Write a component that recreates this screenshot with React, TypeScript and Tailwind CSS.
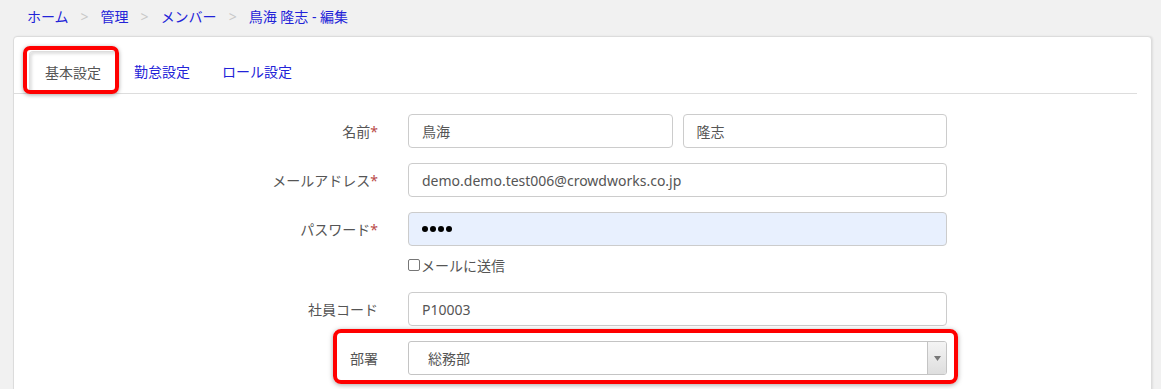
const font = { fontFamily: '"Noto Sans", "Noto Sans CJK JP", sans-serif' };

const crumbs = ["ホーム", "管理", "メンバー"];

function Label({ text, required }: { text: string; required?: boolean }) {
  return (
    <div className="w-[364px] shrink-0 pr-0 text-right text-[14px] text-[#555]">
      {text}
      {required && <span className="text-[#b94a48]">*</span>}
    </div>
  );
}

function TextInput({ value, className = "" }: { value: string; className?: string }) {
  return (
    <div
      className={`flex h-[34px] items-center rounded-[4px] border border-[#ccc] bg-white px-[13px] text-[14px] text-[#555] ${className}`}
    >
      {value}
    </div>
  );
}

export default function App() {
  return (
    <div className="h-[389px] w-[1161px] overflow-hidden bg-[#f1f1f1]" style={font}>
      {/* breadcrumb */}
      <div className="flex h-[36px] items-center pb-[4px] pl-[27px] text-[14px]">
        {crumbs.map((c) => (
          <span key={c} className="flex items-center">
            <span className="text-[#2323d8]">{c}</span>
            <span className="mx-[12px] text-[#c8c8c8]">&gt;</span>
          </span>
        ))}
        <span className="text-[#2323d8]">鳥海 隆志 - 編集</span>
      </div>

      {/* card */}
      <div className="ml-[13px] mr-[9px] h-[400px] rounded-t-[4px] border border-[#dcdcdc] bg-white shadow-[1px_0_2px_rgba(0,0,0,0.08)]">
        {/* tabs */}
        <div className="mr-[14px] flex gap-[2px] border-b border-[#ddd] pl-[15px] pt-[14px]">
          <div className="relative">
            <div className="h-[42px] rounded-t-[4px] border border-b-0 border-[#ddd] px-[15px] text-[14px] leading-[41px] text-[#555] shadow-[inset_2px_2px_3px_rgba(0,0,0,0.12)]">
              基本設定
            </div>
            <div className="pointer-events-none absolute left-[-6px] right-[-2px] top-[-5px] bottom-[-1px] rounded-[7px] border-[4px] border-[#ff0000] shadow-[0_1px_4px_rgba(0,0,0,0.35)]" />
          </div>
          <div className="h-[42px] px-[15px] text-[14px] leading-[41px] text-[#2323d8]">勤怠設定</div>
          <div className="h-[42px] px-[15px] text-[14px] leading-[41px] text-[#2323d8]">ロール設定</div>
        </div>

        {/* form */}
        <div className="flex flex-col pt-[20px]">
          <div className="flex items-center gap-[30px]">
            <Label text="名前" required />
            <div className="flex w-[539px] gap-[10px]">
              <TextInput value="鳥海" className="flex-1" />
              <TextInput value="隆志" className="flex-1" />
            </div>
          </div>

          <div className="mt-[15px] flex items-center gap-[30px]">
            <Label text="メールアドレス" required />
            <TextInput value="demo.demo.test006@crowdworks.co.jp" className="w-[539px]" />
          </div>

          <div className="mt-[15px] flex items-center gap-[30px]">
            <Label text="パスワード" required />
            <div className="flex h-[34px] w-[539px] items-center gap-[2px] rounded-[4px] border border-[#ccc] bg-[#e8f0fe] px-[13px]">
              {[0, 1, 2, 3].map((i) => (
                <span key={i} className="h-[6px] w-[6px] rounded-full bg-black" />
              ))}
            </div>
          </div>

          <div className="mt-[9px] flex h-[20px] items-center gap-[30px]">
            <div className="w-[364px] shrink-0" />
            <label className="flex items-center text-[14px] text-[#555]">
              <span className="mr-[1px] h-[12px] w-[12px] rounded-[2px] border border-[#767676] bg-white" />
              メールに送信
            </label>
          </div>

          <div className="mt-[17px] flex items-center gap-[30px]">
            <Label text="社員コード" />
            <TextInput value="P10003" className="w-[539px]" />
          </div>

          <div className="relative mt-[15px] flex items-center gap-[30px]">
            <Label text="部署" />
            <div className="flex h-[34px] w-[539px] items-stretch overflow-hidden rounded-[3px] border border-[#c4c4c4] bg-white text-[14px] text-[#555]">
              <div className="flex flex-1 items-center pl-[19px]">総務部</div>
              <div className="flex w-[19px] items-center justify-center border-l border-[#c4c4c4] bg-gradient-to-b from-[#f4f4f4] to-[#dedede]">
                <svg width="7" height="5" viewBox="0 0 7 5">
                  <path d="M0 0H7L3.5 5Z" fill="#777" />
                </svg>
              </div>
            </div>
            <div className="pointer-events-none absolute left-[319px] top-[-12px] h-[55px] w-[625px] rounded-[8px] border-[4px] border-[#ff0000] shadow-[0_1px_5px_rgba(0,0,0,0.35)]" />
          </div>
        </div>
      </div>
    </div>
  );
}
